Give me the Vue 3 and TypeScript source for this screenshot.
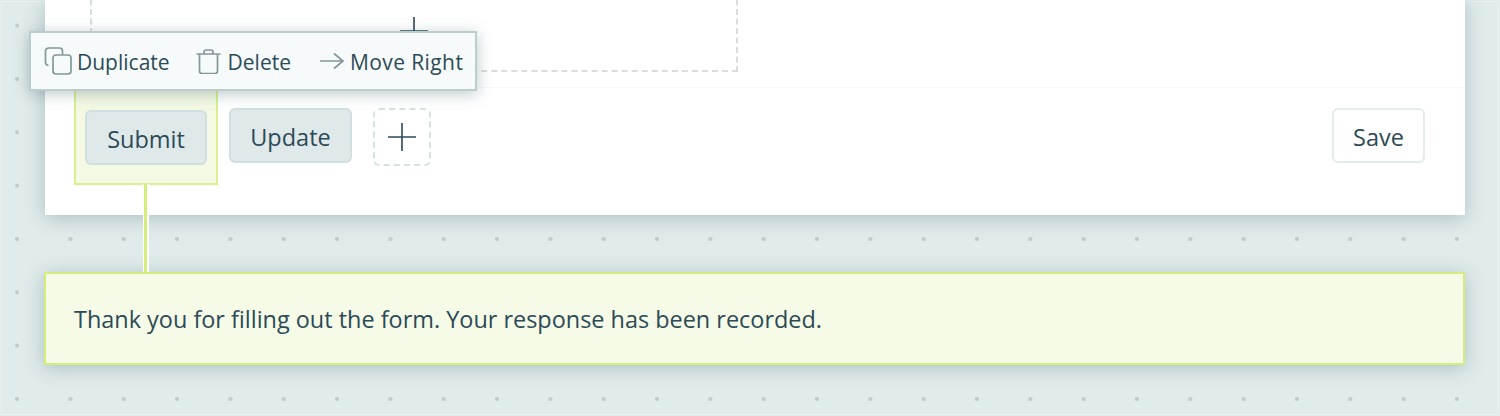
<script setup lang="ts">
const actions: { label: string; icon: string }[] = [
  { label: 'Duplicate', icon: 'copy' },
  { label: 'Delete', icon: 'trash' },
  { label: 'Move Right', icon: 'arrow' },
]
</script>

<template>
  <main class="canvas">
    <section class="card">
      <div class="card-top">
        <div class="dropzone">
          <svg class="plus" viewBox="0 0 28 28" width="28" height="28"><path d="M14 0v28M0 14h28" /></svg>
        </div>
      </div>
      <div class="card-foot">
        <div class="selected">
          <button class="btn filled">Submit</button>
        </div>
        <button class="btn filled update">Update</button>
        <button class="add" aria-label="Add">
          <svg class="plus" viewBox="0 0 28 28" width="28" height="28"><path d="M14 0v28M0 14h28" /></svg>
        </button>
        <button class="btn outline">Save</button>
      </div>
    </section>

    <section class="message">Thank you for filling out the form. Your response has been recorded.</section>

    <div class="connector"></div>

    <div class="toolbar">
      <button v-for="a in actions" :key="a.label" class="tool" :class="a.icon">
        <svg v-if="a.icon === 'copy'" viewBox="0 0 28 28" width="28" height="28">
          <path d="M4.500 18.500A3 3 0 0 1 1.500 15.500V4a3 3 0 0 1 3-3h11a3 3 0 0 1 3 3v3.500" />
          <rect x="9" y="8" width="18" height="19" rx="3" />
        </svg>
        <svg v-else-if="a.icon === 'trash'" viewBox="0 0 25 25" width="25" height="25">
          <path d="M.5 5h24M8 5V3a2 2 0 0 1 2-2h5a2 2 0 0 1 2 2v2M3.500 5v17a2.500 2.500 0 0 0 2.500 2.500h13a2.500 2.500 0 0 0 2.500-2.500V5" />
        </svg>
        <svg v-else viewBox="0 0 26 18" width="26" height="18">
          <path d="M1 9h23M15 1.500 24 9l-9 7.500" />
        </svg>
        <span>{{ a.label }}</span>
      </button>
    </div>
  </main>
</template>

<style>
html, body { margin: 0; padding: 0; }
</style>

<style scoped>
.canvas {
  position: relative;
  box-sizing: border-box;
  width: 1500px;
  height: 416px;
  overflow: hidden;
  padding: 0 35px 0 45px;
  font-family: "Open Sans", "Noto Sans", sans-serif;
  color: #2c4a57;
  background-color: #e0ebeb;
  background-image: radial-gradient(circle at center, #bfcdcd 0, #bfcdcd 1.7px, transparent 2.4px);
  background-size: 53.333px 53.333px;
  background-position: -9.6px -1px;
  box-shadow: inset 0 0 0 1px #e0ebeb, inset 0 0 0 2px #e9f1f1;
}
.card {
  display: flex;
  flex-direction: column;
  height: 215px;
  background: #fff;
  box-shadow: 0 3px 18px rgba(90, 120, 125, 0.38);
}
.card-top {
  box-sizing: border-box;
  height: 88px;
  padding-left: 45px;
  border-bottom: 1px solid #f7f8f8;
}
.dropzone {
  box-sizing: border-box;
  display: flex;
  align-items: center;
  justify-content: center;
  width: 648px;
  height: 82px;
  margin-top: -10px;
  border: 2px dashed #d8dddd;
}
.plus path {
  fill: none;
  stroke: #2c4a57;
  stroke-width: 1.6;
}
.card-foot {
  display: flex;
  align-items: flex-start;
  padding: 0 40px 0 29px;
}
.selected {
  box-sizing: border-box;
  height: 97px;
  padding: 22px 9px 0;
  background: #f4f9e4;
  border: 2px solid #d9f08e;
  border-top: 0;
}
.btn {
  box-sizing: border-box;
  height: 55px;
  padding: 2px 0 0;
  border-radius: 6px;
  font: inherit;
  font-size: 23.5px;
  color: inherit;
}
.filled {
  width: 122px;
  background: #dfe9e9;
  border: 2px solid #d0dfdf;
}
.update {
  width: 123px;
  margin: 20px 0 0 11px;
}
.add {
  box-sizing: border-box;
  display: flex;
  align-items: center;
  justify-content: center;
  width: 58px;
  height: 58px;
  margin: 20px 0 0 21px;
  padding: 0;
  background: #fff;
  border: 2px dashed #d6e2e2;
  border-radius: 6px;
}
.outline {
  width: 93px;
  margin: 20px 0 0 auto;
  background: #fff;
  border: 2px solid #e2ecec;
}
.message {
  box-sizing: border-box;
  display: flex;
  align-items: center;
  width: 1421px;
  height: 93px;
  margin: 57px 0 0 -1px;
  padding: 0 0 0 28px;
  background: #f5fbe6;
  border: 2px solid #d4ee7c;
  font-size: 23.45px;
  box-shadow: 0 3px 18px rgba(90, 120, 125, 0.38);
}
.connector {
  position: absolute;
  left: 144px;
  top: 184px;
  width: 3px;
  height: 88px;
  background: #d4ee7c;
  box-shadow: -1px 0 0 #fff, 2px 0 0 #fff;
}
.toolbar {
  position: absolute;
  left: 29px;
  top: 31px;
  box-sizing: border-box;
  display: flex;
  align-items: center;
  width: 448px;
  height: 60px;
  padding-left: 13px;
  background: #f6fafb;
  border: 2px solid #bccdcd;
  box-shadow: 0 3px 14px rgba(70, 100, 105, 0.35);
}
.tool {
  display: flex;
  align-items: center;
  gap: 5px;
  padding: 0;
  background: none;
  border: 0;
  font: inherit;
  font-size: 21px;
  color: inherit;
}
.tool span { padding-top: 2px; }
.tool svg {
  fill: none;
  stroke: #82989a;
  stroke-width: 1.7;
}
.trash { margin-left: 26px; gap: 7px; }
.arrow { margin-left: 28px; }
.arrow span { letter-spacing: 0.4px; }
</style>
